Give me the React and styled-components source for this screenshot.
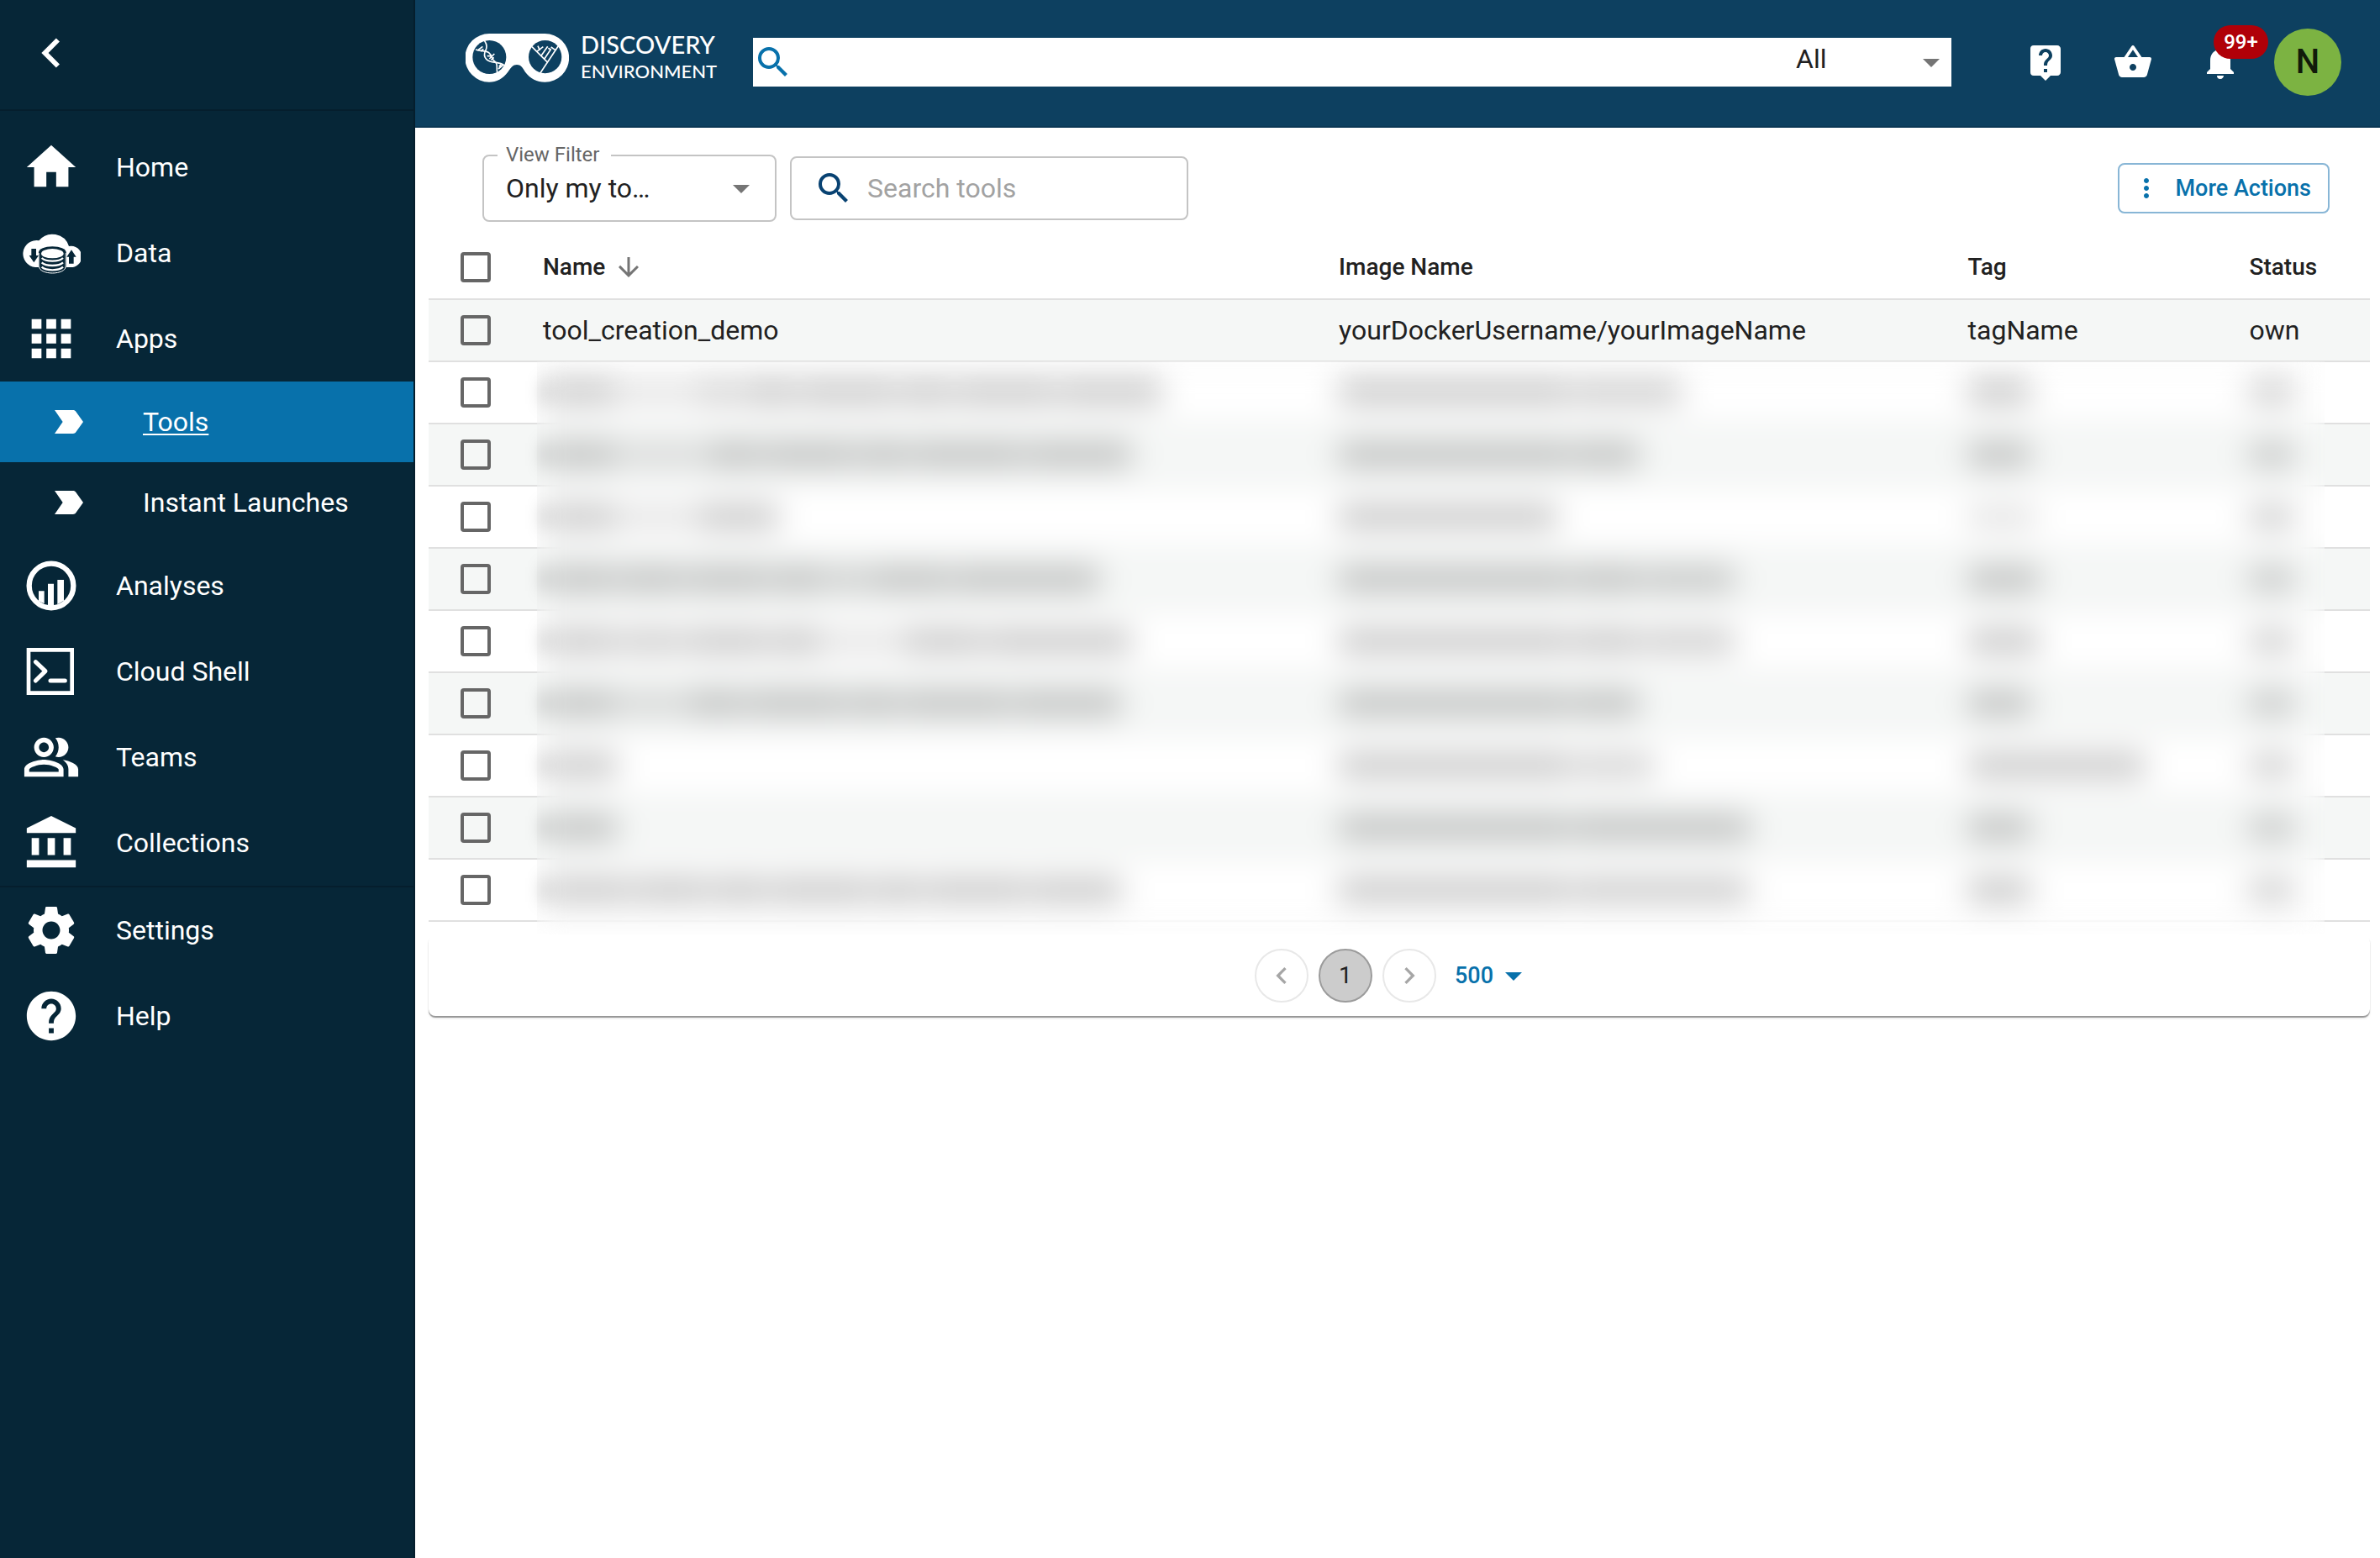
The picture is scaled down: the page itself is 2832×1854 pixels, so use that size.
import React from 'react';
import styled, { createGlobalStyle, css } from 'styled-components';
import {
  MdApps,
  MdArrowDownward,
  MdArrowDropDown,
  MdChevronLeft,
  MdChevronRight,
  MdHelp,
  MdHome,
  MdLabelImportant,
  MdLiveHelp,
  MdMoreVert,
  MdNotifications,
  MdOutlinePeopleAlt,
  MdSearch,
  MdSettings,
  MdShoppingBasket,
} from 'react-icons/md';

const color = {
  sidebar: '#062637',
  sidebarLine: '#051e2d',
  header: '#0d4060',
  headerLine: '#0b3855',
  primary: '#0871ab',
  navy: '#084272',
  text: '#212121',
  muted: '#666666',
  icon: '#757575',
  outline: '#c4c4c4',
  line: '#e0e0e0',
  stripe: '#f5f7f6',
};

const GlobalStyle = createGlobalStyle`
  *, *::before, *::after { box-sizing: border-box; }
  body {
    margin: 0;
    background: #ffffff;
    color: ${color.text};
    font-family: Roboto, "Liberation Sans", sans-serif;
    font-size: 32px;
    line-height: 48px;
  }
  button, input, select { font: inherit; color: inherit; margin: 0; }
  button { border: 0; padding: 0; background: none; cursor: pointer; }
  a { color: inherit; text-decoration: none; }
  svg { display: block; flex: none; }
`;

const Page = styled.div`
  display: flex;
  min-height: 100vh;
`;

/* Sidebar */

const Sidebar = styled.nav`
  flex: none;
  width: 494px;
  background: ${color.sidebar};
  border-right: 2px solid ${color.sidebarLine};
  color: #ffffff;
`;

const SidebarTop = styled.div`
  display: flex;
  padding: 28px 26px 32px;
  border-bottom: 2px solid ${color.sidebarLine};
`;

const NavList = styled.ul`
  list-style: none;
  margin: 0;
  padding: ${(p) => (p.$padTop ? '16px 0 0' : '0')};
  border-bottom: ${(p) => (p.$divided ? `2px solid ${color.sidebarLine}` : '0')};
`;

const NavLink = styled.a`
  display: flex;
  align-items: center;
  height: 102px;
  padding-left: 26px;
  gap: 42px;
  ${(p) =>
    p.$nested &&
    css`
      height: 96px;
      padding-left: 58px;
      gap: 64px;
    `}
  ${(p) =>
    p.$active &&
    css`
      background: ${color.primary};
      text-decoration: underline;
      text-decoration-thickness: 2px;
      text-underline-offset: 3px;
    `}
`;

/* Header */

const Main = styled.div`
  flex: 1;
  min-width: 0;
`;

const Header = styled.header`
  display: flex;
  align-items: center;
  height: 152px;
  padding: 0 46px 2px 60px;
  background: ${color.header};
  border-bottom: 2px solid ${color.headerLine};
  color: #ffffff;
`;

const Brand = styled.a`
  display: flex;
  align-items: center;
  gap: 14px;
  padding-bottom: 10px;
  font-family: Lato, "Liberation Sans", sans-serif;
  font-weight: 500;
  line-height: 32px;
`;

const BrandText = styled.div`
  width: 166px;
  white-space: nowrap;
`;

const BrandLine = styled.div`
  font-size: ${(p) => (p.$small ? '22px' : '29px')};
`;

const GlobalSearch = styled.form`
  flex: 1;
  display: flex;
  align-items: center;
  height: 58px;
  margin: 0 64px 0 39px;
  background: #ffffff;
  color: ${color.primary};
`;

const GlobalInput = styled.input`
  flex: 1;
  min-width: 0;
  height: 58px;
  border: 0;
  outline: 0;
  background: transparent;
  color: ${color.text};
`;

const SelectBox = styled.div`
  display: grid;
  grid-template-columns: 1fr;
  align-items: center;
  width: ${(p) => p.$width};
  color: ${color.icon};
  & > select, & > svg { grid-area: 1 / 1; }
  & > svg { justify-self: end; pointer-events: none; }
`;

const PlainSelect = styled.select`
  appearance: none;
  width: 100%;
  height: 58px;
  padding: 0 48px 8px 0;
  border: 0;
  outline: 0;
  background: transparent;
  color: ${color.text};
`;

const HeaderActions = styled.div`
  display: flex;
  align-items: center;
  gap: 8px;
`;

const IconButton = styled.button`
  position: relative;
  display: flex;
  padding: 24px;
`;

const Badge = styled.span`
  position: absolute;
  top: 4px;
  left: 40px;
  min-width: 65px;
  border-radius: 20px;
  background: #b00008;
  font-size: 24px;
  font-weight: 500;
  line-height: 40px;
  text-align: center;
`;

const Avatar = styled.button`
  width: 80px;
  height: 80px;
  margin-left: 8px;
  border-radius: 50%;
  background: #7cb342;
  color: #111a0a;
  font-size: 40px;
  font-weight: 500;
`;

/* Toolbar */

const Toolbar = styled.div`
  display: flex;
  align-items: center;
  gap: 16px;
  padding: 32px 60px 16px 80px;
`;

const FilterField = styled.div`
  position: relative;
`;

const FilterLabel = styled.label`
  position: absolute;
  top: -16px;
  left: 18px;
  padding: 0 14px 0 10px;
  background: #ffffff;
  color: ${color.muted};
  font-size: 24px;
  line-height: 32px;
`;

const FilterSelect = styled.select`
  appearance: none;
  width: 100%;
  height: 80px;
  padding: 0 64px 0 26px;
  border: 2px solid ${color.outline};
  border-radius: 8px;
  background: transparent;
  color: ${color.text};
  & + svg { margin-right: 18px; }
`;

const ToolSearch = styled.div`
  display: flex;
  align-items: center;
  gap: 16px;
  width: 474px;
  height: 76px;
  padding: 0 26px;
  border: 2px solid ${color.outline};
  border-radius: 8px;
  color: ${color.navy};
`;

const ToolInput = styled.input`
  flex: 1;
  min-width: 0;
  height: 48px;
  padding: 0;
  border: 0;
  outline: 0;
  background: transparent;
  color: ${color.text};
  &::placeholder { color: #a2a2a2; opacity: 1; }
`;

const ActionsButton = styled.button`
  display: flex;
  align-items: center;
  gap: 16px;
  height: 60px;
  margin-left: auto;
  padding: 0 20px 0 14px;
  border: 2px solid #88b6d6;
  border-radius: 8px;
  color: ${color.primary};
  font-size: 27px;
  font-weight: 500;
`;

/* Table */

const Content = styled.main`
  position: relative;
  padding: 0 12px 0 16px;
`;

const Table = styled.table`
  width: 100%;
  table-layout: fixed;
  border-collapse: separate;
  border-spacing: 0;
`;

const Col = styled.col`
  width: ${(p) => p.$width};
`;

const Th = styled.th`
  height: 77px;
  padding: 0 8px;
  border-bottom: 2px solid ${color.line};
  font-size: 28px;
  font-weight: 500;
  text-align: left;
`;

const SortButton = styled.button`
  display: flex;
  align-items: center;
  gap: 10px;
  color: inherit;
  & > svg { color: ${color.icon}; }
`;

const Tr = styled.tr`
  &:nth-child(odd) { background: ${color.stripe}; }
`;

const Td = styled.td`
  height: 74px;
  padding: 0 8px;
  border-bottom: 2px solid ${color.line};
`;

const Tick = styled.input`
  appearance: none;
  display: block;
  width: 36px;
  height: 36px;
  margin-left: 30px;
  border: 4px solid ${color.muted};
  border-radius: 4px;
`;

const Words = styled.div`
  display: flex;
  gap: 4px;
  filter: blur(10px);
`;

const Word = styled.span`
  width: ${(p) => p.$width}px;
  height: 28px;
  background: #000000;
  opacity: ${(p) => p.$ink};
`;

/* Frosted pane that hides the private rows. */
const Frost = styled.div`
  position: absolute;
  top: 150px;
  bottom: 97px;
  left: 145px;
  right: 66px;
  backdrop-filter: blur(16px);
`;

const Pager = styled.nav`
  display: flex;
  align-items: center;
  justify-content: center;
  gap: 12px;
  margin-top: 16px;
  padding: 16px 0;
  border-radius: 8px;
  background: #ffffff;
  box-shadow:
    0 2px 1px 0 rgba(0, 0, 0, 0.36),
    0 3px 3px 0 rgba(0, 0, 0, 0.08);
`;

const PageButton = styled.button`
  display: flex;
  align-items: center;
  justify-content: center;
  width: 64px;
  height: 64px;
  border: 2px solid ${(p) => (p.$current ? '#9b9b9b' : '#e8e8e8')};
  border-radius: 50%;
  background: ${(p) => (p.$current ? '#cccccc' : '#ffffff')};
  color: ${(p) => (p.$current ? color.text : '#a6a6a6')};
  font-size: 28px;
`;

const SizeButton = styled.button`
  display: flex;
  align-items: center;
  margin-left: 10px;
  padding-right: 12px;
  color: ${color.primary};
  font-size: 27px;
  font-weight: 500;
`;

/* Drawings */

const DataIcon = ({ size }) => (
  <svg width={size} height={size} viewBox="78 795 210 210" fill="#fff" aria-hidden="true">
    <path d="M126 951a48 48 0 1 1 13-95 62 62 0 0 1 107 20 38 38 0 1 1 4 75z" />
    <path
      d="M138 898c0-12 22-21 49-21s49 9 49 21v52c0 14-22 25-49 25s-49-11-49-25z"
      fill={color.sidebar}
    />
    <path d="M140 950c0 12 21 22 47 22s47-10 47-22" fill="none" stroke="#fff" strokeWidth="3" />
    <path d="M140 900v52M234 900v52" stroke="#fff" strokeWidth="2" />
    <ellipse cx="187" cy="902" rx="40" ry="17" />
    <path
      d="M149 918c8 8 22 11 38 11s30-3 38-11M149 934c8 8 22 11 38 11s30-3 38-11M149 950c8 8 22 11 38 11s30-3 38-11"
      fill="none"
      stroke="#fff"
      strokeWidth="7"
    />
    <path d="M112 885h17v24h9l-17 25-17-25h8zM246 938h17v-24h9l-17-25-17 25h8z" fill={color.sidebar} />
  </svg>
);

const AnalysesIcon = ({ size }) => (
  <svg width={size} height={size} viewBox="78 696 210 210" fill="#fff" aria-hidden="true">
    <circle cx="183" cy="801" r="79" fill="none" stroke="#fff" strokeWidth="19" />
    <path d="M138 820h20v45l-20-9zM171 794h21v80h-21zM205 780h23v74l-23 14z" />
  </svg>
);

const ShellIcon = ({ size }) => (
  <svg width={size} height={size} viewBox="78 1002 210 210" fill="none" stroke="#fff" aria-hidden="true">
    <path d="M102 1030h155v154h-155z" strokeWidth="14" />
    <path d="M127 1073l35 33-35 34M180 1140h52" strokeWidth="15" strokeLinecap="round" strokeLinejoin="round" />
  </svg>
);

const CollectionsIcon = ({ size }) => (
  <svg width={size} height={size} viewBox="0 0 24 24" fill="#fff" aria-hidden="true">
    <path d="M4 10h3v7H4zM10.5 10h3v7h-3zM2 19h20v3H2zM17 10h3v7h-3zM12 1L2 6v2h20V6z" />
  </svg>
);

const Goggles = () => (
  <svg width="123" height="58" viewBox="193 120 369 174" fill="none" aria-hidden="true">
    <path
      d="M278 120H476a86 86 0 0 1 0 173c-28 0-52-12-70-36-10-16-16-26-30-26s-20 10-32 26c-18 24-40 36-67 36a86 86 0 0 1 1-173z"
      fill="#fff"
    />
    <circle cx="278" cy="204" r="60" fill={color.header} />
    <circle cx="477" cy="203" r="59" fill={color.header} />
    <g stroke="#fff" strokeWidth="5">
      <path d="M261 146c10 14 8 27 2 37-8 20 4 34 24 38 20 3 34 3 45 13" />
      <path d="M229 177c18 8 36 1 47 11 14 12 8 24 22 32 12 8 4 24 8 38" />
      <path d="M236 180l18-14M247 183l10-8M270 200l18 0M278 210l18-18M284 214l10-9M310 246l18-15M312 238l8-8" />
    </g>
    <g stroke="#fff" strokeWidth="5">
      <path d="M430 167l54 54M524 164l-64 96M447 184l23-17M458 180l-7-16M462 200l24-34M474 211l24-36M514 179l-16-11M488 172l10 6" />
    </g>
  </svg>
);

/* Data */

const mainNav = [
  { label: 'Home', Icon: MdHome },
  { label: 'Data', Icon: DataIcon },
  { label: 'Apps', Icon: MdApps },
  { label: 'Tools', Icon: MdLabelImportant, nested: true, active: true },
  { label: 'Instant Launches', Icon: MdLabelImportant, nested: true },
  { label: 'Analyses', Icon: AnalysesIcon },
  { label: 'Cloud Shell', Icon: ShellIcon },
  { label: 'Teams', Icon: MdOutlinePeopleAlt },
  { label: 'Collections', Icon: CollectionsIcon },
];

const footNav = [
  { label: 'Settings', Icon: MdSettings },
  { label: 'Help', Icon: MdHelp },
];

/* Word widths of each private row; a pair gives width and relative ink. */
const privateRows = [
  [[88, [84, 0.5], [56, 0.8], 62, 114, 64, 118, 122], [274, [129, 0.9]], [74], [[54, 0.85]]],
  [[88, [100, 0.55], 64, 108, 60, 132, 124], [274, 79], [74], [[54, 0.85]]],
  [[88, [88, 0.5], 96], [259], [[80, 0.5]], [[54, 0.85]]],
  [[88, 76, 96, 64, [44, 0.8], 96, 174], [274, 80, [109, 0.9]], [84], [[54, 0.85]]],
  [[88, [76, 0.9], 96, 60, [88, 0.5], 96, 172], [274, 80, [109, 0.9]], [84], [[54, 0.85]]],
  [[88, [76, 0.6], 68, 116, 60, 128, 128], [274, 79], [74], [[54, 0.85]]],
  [[88], [274, [97, 0.8]], [210], [[54, 0.85]]],
  [[88], [274, 211], [74], [[54, 0.85]]],
  [[104, 88, 68, 116, 60, 120, 108], [274, [209, 0.95]], [74], [[54, 0.85]]],
];

const INK = 0.23;

const NavItems = ({ items }) =>
  items.map(({ label, Icon, nested, active }) => (
    <li key={label}>
      <NavLink href="#" $nested={nested} $active={active} aria-current={active ? 'page' : undefined}>
        <Icon size={nested ? 48 : 70} />
        {label}
      </NavLink>
    </li>
  ));

const MaskedCell = ({ words }) => (
  <Td>
    <Words aria-hidden="true">
      {words.map((word, i) => {
        const [width, ink] = Array.isArray(word) ? word : [word, 1];
        return <Word key={i} $width={width} $ink={ink * INK} />;
      })}
    </Words>
  </Td>
);

export default function App() {
  return (
    <Page>
      <GlobalStyle />
      <Sidebar aria-label="Main">
        <SidebarTop>
          <button type="button" aria-label="Collapse menu">
            <MdChevronLeft size={70} />
          </button>
        </SidebarTop>
        <NavList $padTop $divided>
          <NavItems items={mainNav} />
        </NavList>
        <NavList>
          <NavItems items={footNav} />
        </NavList>
      </Sidebar>

      <Main>
        <Header>
          <Brand href="#">
            <Goggles />
            <BrandText>
              <BrandLine>DISCOVERY</BrandLine>
              <BrandLine $small>ENVIRONMENT</BrandLine>
            </BrandText>
          </Brand>
          <GlobalSearch role="search">
            <MdSearch size={48} />
            <GlobalInput type="text" aria-label="Search" />
            <SelectBox $width="185px">
              <PlainSelect aria-label="Search in">
                <option>All</option>
              </PlainSelect>
              <MdArrowDropDown size={48} />
            </SelectBox>
          </GlobalSearch>
          <HeaderActions>
            <IconButton type="button" aria-label="Support">
              <MdLiveHelp size={48} />
            </IconButton>
            <IconButton type="button" aria-label="Bag">
              <MdShoppingBasket size={48} />
            </IconButton>
            <IconButton type="button" aria-label="Notifications">
              <MdNotifications size={48} />
              <Badge>99+</Badge>
            </IconButton>
            <Avatar type="button" aria-label="Account">
              N
            </Avatar>
          </HeaderActions>
        </Header>

        <Toolbar>
          <FilterField>
            <SelectBox $width="350px">
              <FilterSelect id="view-filter">
                <option>Only my to…</option>
              </FilterSelect>
              <MdArrowDropDown size={48} />
            </SelectBox>
            <FilterLabel htmlFor="view-filter">View Filter</FilterLabel>
          </FilterField>
          <ToolSearch>
            <MdSearch size={48} />
            <ToolInput type="text" placeholder="Search tools" aria-label="Search tools" />
          </ToolSearch>
          <ActionsButton type="button">
            <MdMoreVert size={36} />
            More Actions
          </ActionsButton>
        </Toolbar>

        <Content>
          <Table>
            <colgroup>
              <Col $width="128px" />
              <Col $width="41%" />
              <Col $width="32.4%" />
              <Col $width="14.5%" />
              <Col />
            </colgroup>
            <thead>
              <tr>
                <Th>
                  <Tick type="checkbox" aria-label="Select all tools" />
                </Th>
                <Th aria-sort="ascending">
                  <SortButton type="button">
                    Name
                    <MdArrowDownward size={36} />
                  </SortButton>
                </Th>
                <Th>Image Name</Th>
                <Th>Tag</Th>
                <Th>Status</Th>
              </tr>
            </thead>
            <tbody>
              <Tr>
                <Td>
                  <Tick type="checkbox" aria-label="Select tool_creation_demo" />
                </Td>
                <Td>tool_creation_demo</Td>
                <Td>yourDockerUsername/yourImageName</Td>
                <Td>tagName</Td>
                <Td>own</Td>
              </Tr>
              {privateRows.map((cells, row) => (
                <Tr key={row}>
                  <Td>
                    <Tick type="checkbox" aria-label={`Select tool ${row + 2}`} />
                  </Td>
                  {cells.map((words, i) => (
                    <MaskedCell key={i} words={words} />
                  ))}
                </Tr>
              ))}
            </tbody>
          </Table>
          <Pager aria-label="Pages">
            <PageButton type="button" aria-label="Previous page">
              <MdChevronLeft size={40} />
            </PageButton>
            <PageButton type="button" $current aria-current="page">
              1
            </PageButton>
            <PageButton type="button" aria-label="Next page">
              <MdChevronRight size={40} />
            </PageButton>
            <SizeButton type="button">
              500
              <MdArrowDropDown size={48} />
            </SizeButton>
          </Pager>
          <Frost />
        </Content>
      </Main>
    </Page>
  );
}
